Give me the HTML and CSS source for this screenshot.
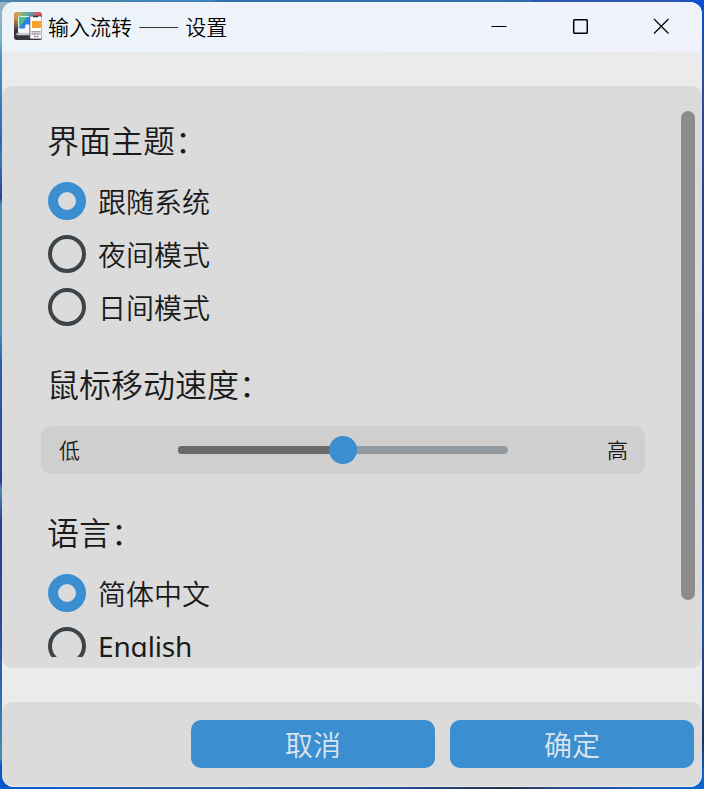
FILE: index.html
```html
<!DOCTYPE html>
<html lang="zh-CN">
<head>
<meta charset="utf-8">
<title>输入流转 —— 设置</title>
<link rel="stylesheet" href="styles.css">
</head>
<body>
<div class="window">
  <header class="titlebar">
    <svg class="app-icon" viewBox="0 0 28 28">
      <defs>
        <linearGradient id="rainbow" x1="0" y1="0" x2="1" y2="0.1">
          <stop offset="0" stop-color="#e0804a"/><stop offset=".2" stop-color="#b9b060"/>
          <stop offset=".42" stop-color="#55b58a"/><stop offset=".62" stop-color="#6a94b8"/>
          <stop offset=".82" stop-color="#d9606c"/><stop offset="1" stop-color="#e2404a"/>
        </linearGradient>
        <linearGradient id="dark" x1="0" y1="0" x2="0" y2="1">
          <stop offset=".2" stop-color="#3b3540" stop-opacity="0"/><stop offset=".65" stop-color="#3b3540"/>
        </linearGradient>
      </defs>
      <rect width="28" height="28" rx="3" fill="url(#rainbow)"/>
      <rect width="28" height="28" rx="3" fill="url(#dark)"/>
      <rect x="4.5" y="4.5" width="12" height="16.5" rx="1" fill="#2f80ea" stroke="#e6eef2"/>
      <path d="M5 5h8L5 16z" fill="#45c47c"/>
      <path d="M5 16.5h6l.5-4H16V21H5z" fill="#f4f6fa"/>
      <path d="M2 21.3h14v2H3z" fill="#d5d5dc"/>
      <rect x="15.8" y="4" width="12.2" height="23" rx="1.5" fill="#fff" stroke="#33303a" stroke-width=".7"/>
      <path d="M19 4h5v1.3h-5z" fill="#333"/>
      <rect x="18" y="9" width="9" height="7" fill="#f6a22b"/>
      <path d="M17.5 19.7h9M17.5 22h9M20 24.5h5" stroke="#85858b" stroke-width="1.5" stroke-dasharray="2 .6"/>
    </svg>
    <h1 class="title">输入流转 —— 设置</h1>
    <div class="controls">
      <svg viewBox="0 0 16 16"><path d="M.5 8.5h15"/></svg>
      <svg viewBox="0 0 16 16"><rect class="square" x="1.7" y="1.7" width="13.6" height="13.6" rx="1"/></svg>
      <svg viewBox="0 0 16 16"><path d="m1 1 14.5 14.5M15.5 1 1 15.5"/></svg>
    </div>
  </header>
  <main class="panel">
    <div class="content">
      <section class="group theme">
        <h2>界面主题：</h2>
        <div class="option"><i class="radio checked"></i><span>跟随系统</span></div>
        <div class="option"><i class="radio"></i><span>夜间模式</span></div>
        <div class="option"><i class="radio"></i><span>日间模式</span></div>
      </section>
      <section class="group speed">
        <h2>鼠标移动速度：</h2>
        <div class="slider-card">
          <span>低</span>
          <div class="slider"><div class="fill"></div><div class="thumb"></div></div>
          <span>高</span>
        </div>
      </section>
      <section class="group language">
        <h2>语言：</h2>
        <div class="option"><i class="radio checked"></i><span>简体中文</span></div>
        <div class="option"><i class="radio"></i><span class="latin">English</span></div>
      </section>
    </div>
    <div class="scrollbar"></div>
  </main>
  <footer class="actions">
    <button>取消</button>
    <button>确定</button>
  </footer>
</div>
</body>
</html>
```

FILE: styles.css
```css
* { box-sizing: border-box; }

body {
  margin: 0;
  height: 789px;
  padding: 2px;
  overflow: hidden;
  font-family: "Noto Sans CJK SC", sans-serif;
  font-weight: 350;
  color: #1a1a1a;
  background:
    linear-gradient(90deg, #4785b4 0 10%, #3e83b8 30%, #326eae 31% 75%, #2b56ac 76% 96%, #0850d8) top / 100% 2px no-repeat,
    linear-gradient(90deg, #0a5acb 0 8%, #2b5ba3 20%, #1e4c9c 55%, #293346 72%, #2b4b95 80%, #0a63d0) bottom / 100% 2px no-repeat,
    linear-gradient(#9ab4c4 0, #7fb0c8 5%, #4f94bc 7%, #2f65b5 18%, #3d7db5 20%, #263fa0 25%, #4a8fb0 26%, #4a8fb5 42%, #2c5eae 46%, #2a409b 61%, #4a8cb0 62%, #2a418e 66%, #27488f 78%, #2c62b4 86%, #4790aa 96%, #0a55cd 97%) left / 50% 100% no-repeat,
    linear-gradient(#0850d8 0, #2a4f9c 10%, #263a7b 40%, #26346b 60%, #1d50a8 80%, #28407e 84%, #232f5e 94%, #0a63d0 98%) right / 50% 100% no-repeat;
}

.window {
  display: flex;
  flex-direction: column;
  height: 785px;
  border-radius: 12px;
  overflow: hidden;
  background: #ebebeb;
}

.titlebar {
  display: flex;
  align-items: center;
  flex: none;
  height: 50px;
  padding: 0 33px 0 12px;
  background: linear-gradient(100deg, #edf4f8, #eff2fb);
}

.app-icon { width: 28px; height: 28px; margin-top: -2px; }

.title {
  margin: -3px auto 0 6px;
  font-size: 21px;
  font-weight: 350;
  line-height: 30px;
  word-spacing: 1px;
  color: #000;
}

.controls { display: flex; gap: 65px; margin-top: -3px; }
.controls svg { width: 16px; height: 16px; fill: none; stroke: #000; stroke-width: 1.2; }
.controls .square { stroke-width: 1.5; }

.panel {
  display: flex;
  flex: none;
  height: 582px;
  margin-top: 34px;
  padding: 25px 7px 11px 39px;
  border-radius: 11px;
  background: #dbdbdb;
}

.content { width: 604px; height: 546px; overflow: hidden; }
.group { padding-left: 7px; }
.speed { padding-left: 0; margin-top: 29px; }
.speed h2 { padding-left: 7px; }
.language { margin-top: 29px; }

h2 {
  margin: 0 0 0 -1px;
  height: 71px;
  padding-top: 4px;
  font-size: 32px;
  font-weight: 350;
  line-height: 48px;
}

.option {
  display: flex;
  align-items: center;
  gap: 12px;
  height: 38px;
  margin-bottom: 15px;
  font-size: 28px;
  line-height: 38px;
}
.option span { margin-top: -1px; }
.option .latin {
  margin-top: 0;
  font-family: "Noto Sans", sans-serif;
  font-weight: 400;
  letter-spacing: -.15px;
}

.radio { width: 38px; height: 38px; border: 4px solid #3e454a; border-radius: 50%; }
.radio.checked { border: 10px solid #3b8ed0; }

.slider-card {
  display: flex;
  align-items: center;
  justify-content: space-between;
  height: 48px;
  padding: 0 17px 0 18px;
  border-radius: 11px;
  background: #cfcfcf;
  font-size: 21px;
}
.slider-card span { margin-top: -3px; }
.slider {
  position: relative;
  width: 330px;
  height: 8px;
  margin-right: 1px;
  border-radius: 4px;
  background: #939ba2;
}
.fill { width: 50%; height: 8px; border-radius: 4px 0 0 4px; background: #696969; }
.thumb {
  position: absolute;
  top: -10px;
  left: 151px;
  width: 28px;
  height: 28px;
  border-radius: 50%;
  background: #3b8ed0;
}

.scrollbar { width: 14px; height: 489px; margin-left: auto; border-radius: 7px; background: #8d8d8d; }

.actions {
  display: flex;
  justify-content: flex-end;
  gap: 15px;
  flex: none;
  height: 85px;
  margin-top: 34px;
  padding: 18px 8px;
  border-radius: 11px;
  border-bottom: 1px solid #ebebeb;
  background: #dbdbdb;
}
.actions button {
  width: 244px;
  height: 48px;
  padding: 0;
  border: 0;
  border-radius: 10px;
  font: inherit;
  font-size: 28px;
  line-height: 40px;
  color: #dce4ee;
  background: #3b8ed0;
}
```
